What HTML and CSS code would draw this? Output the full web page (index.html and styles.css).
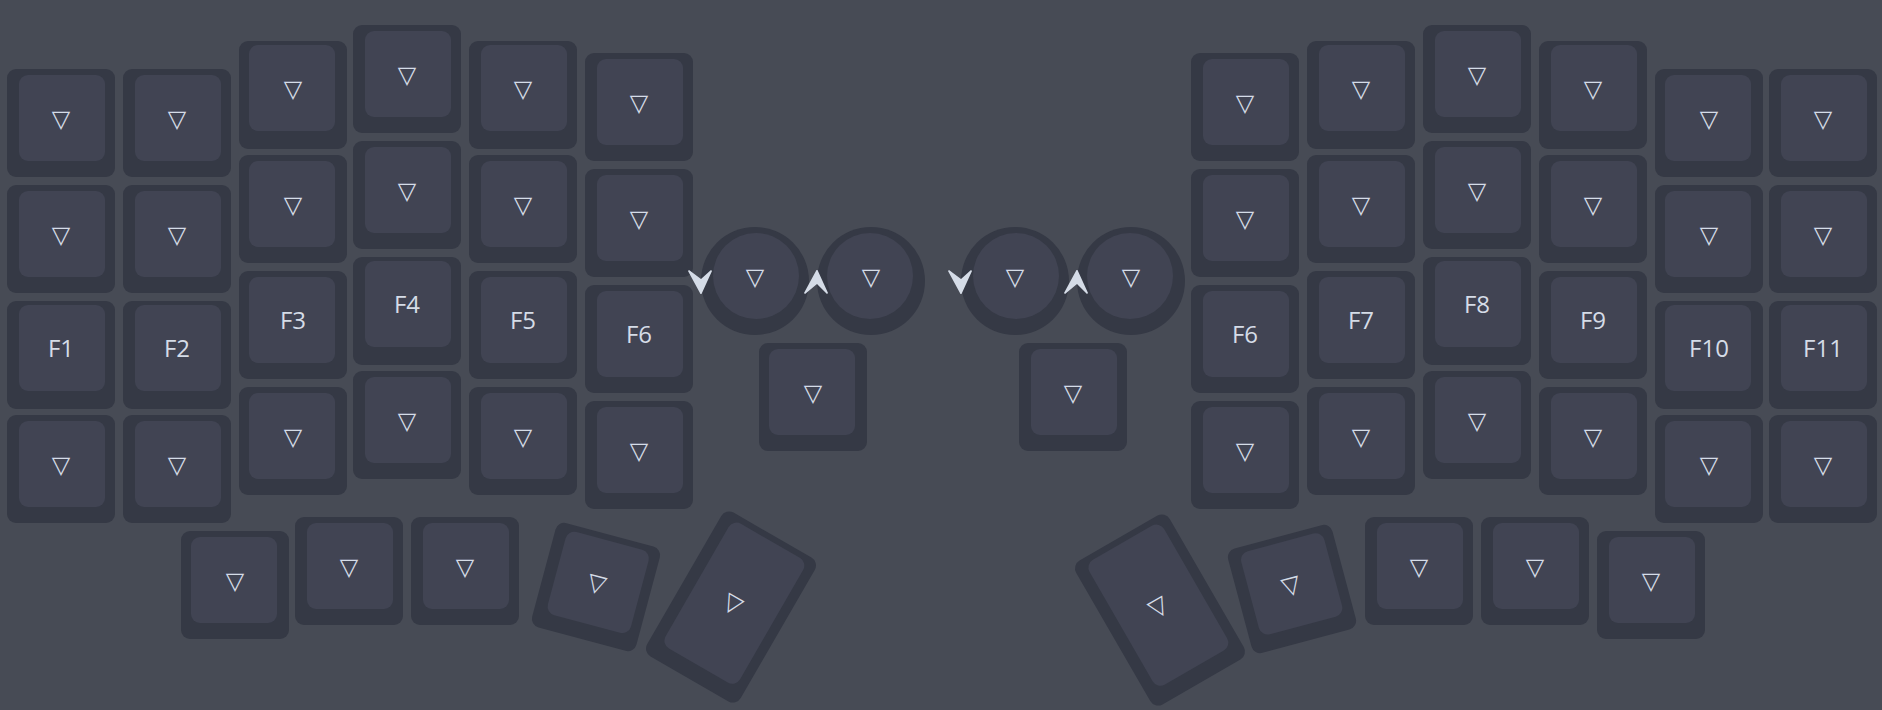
FILE: index.html
```html
<!DOCTYPE html>
<html lang="en">
<head>
<meta charset="utf-8">
<title>Keymap</title>
<meta name="viewport" content="width=device-width, initial-scale=1">
<link rel="stylesheet" href="styles.css">
</head>
<body>
<main class="keyboard">
  <div class="matrix">
    <section class="half half-left" aria-label="Left half">
      <div class="column column-outer">
        <button class="key"><span>▽</span></button>
        <button class="key"><span>▽</span></button>
        <button class="key"><span>F1</span></button>
        <button class="key"><span>▽</span></button>
      </div>
      <div class="column column-outer">
        <button class="key"><span>▽</span></button>
        <button class="key"><span>▽</span></button>
        <button class="key"><span>F2</span></button>
        <button class="key"><span>▽</span></button>
      </div>
      <div class="column column-ring column-near">
        <button class="key"><span>▽</span></button>
        <button class="key"><span>▽</span></button>
        <button class="key"><span>F3</span></button>
        <button class="key"><span>▽</span></button>
      </div>
      <div class="column column-middle">
        <button class="key"><span>▽</span></button>
        <button class="key"><span>▽</span></button>
        <button class="key"><span>F4</span></button>
        <button class="key"><span>▽</span></button>
      </div>
      <div class="column column-ring">
        <button class="key"><span>▽</span></button>
        <button class="key"><span>▽</span></button>
        <button class="key"><span>F5</span></button>
        <button class="key"><span>▽</span></button>
      </div>
      <div class="column column-inner">
        <button class="key"><span>▽</span></button>
        <button class="key"><span>▽</span></button>
        <button class="key"><span>F6</span></button>
        <button class="key"><span>▽</span></button>
      </div>
      <div class="cluster">
        <div class="encoders">
          <button class="key encoder"><span>▽</span>
            <svg class="arrow" viewBox="0 0 24 24" aria-hidden="true"><path d="M0 1 1 0l12 9L23 0l1 1-10.500 23h-1z"/></svg>
          </button>
          <button class="key encoder near"><span>▽</span>
            <svg class="arrow" viewBox="0 0 24 24" aria-hidden="true"><path d="M0 23l1 1 12-10 10 10 1-1L13.500 0h-1z"/></svg>
          </button>
        </div>
        <button class="key near"><span>▽</span></button>
      </div>
    </section>
    <section class="half half-right" aria-label="Right half">
      <div class="cluster">
        <div class="encoders">
          <button class="key encoder"><span>▽</span>
            <svg class="arrow" viewBox="0 0 24 24" aria-hidden="true"><path d="M0 1 1 0l12 9L23 0l1 1-10.500 23h-1z"/></svg>
          </button>
          <button class="key encoder near"><span>▽</span>
            <svg class="arrow" viewBox="0 0 24 24" aria-hidden="true"><path d="M0 23l1 1 12-10 10 10 1-1L13.500 0h-1z"/></svg>
          </button>
        </div>
        <button class="key"><span>▽</span></button>
      </div>
      <div class="column column-inner">
        <button class="key"><span>▽</span></button>
        <button class="key"><span>▽</span></button>
        <button class="key"><span>F6</span></button>
        <button class="key"><span>▽</span></button>
      </div>
      <div class="column column-ring">
        <button class="key"><span>▽</span></button>
        <button class="key"><span>▽</span></button>
        <button class="key"><span>F7</span></button>
        <button class="key"><span>▽</span></button>
      </div>
      <div class="column column-middle">
        <button class="key"><span>▽</span></button>
        <button class="key"><span>▽</span></button>
        <button class="key"><span>F8</span></button>
        <button class="key"><span>▽</span></button>
      </div>
      <div class="column column-ring">
        <button class="key"><span>▽</span></button>
        <button class="key"><span>▽</span></button>
        <button class="key"><span>F9</span></button>
        <button class="key"><span>▽</span></button>
      </div>
      <div class="column column-outer column-near">
        <button class="key"><span>▽</span></button>
        <button class="key"><span>▽</span></button>
        <button class="key"><span>F10</span></button>
        <button class="key"><span>▽</span></button>
      </div>
      <div class="column column-outer">
        <button class="key"><span>▽</span></button>
        <button class="key"><span>▽</span></button>
        <button class="key"><span>F11</span></button>
        <button class="key"><span>▽</span></button>
      </div>
    </section>
  </div>
  <div class="thumbs">
    <section class="thumb-row thumb-left" aria-label="Left thumb keys">
      <button class="key near low"><span>▽</span></button>
      <button class="key"><span>▽</span></button>
      <button class="key"><span>▽</span></button>
      <button class="key tilted"><span>▽</span></button>
      <button class="key tall"><span>▽</span></button>
    </section>
    <section class="thumb-row thumb-right" aria-label="Right thumb keys">
      <button class="key tall"><span>▽</span></button>
      <button class="key tilted"><span>▽</span></button>
      <button class="key"><span>▽</span></button>
      <button class="key"><span>▽</span></button>
      <button class="key low"><span>▽</span></button>
    </section>
  </div>
</main>
</body>
</html>
```
FILE: styles.css
```css
:root {
  --board: #474b55;
  --key: #353945;
  --cap: #414453;
  --text: #d5dce7;
}

* {
  box-sizing: border-box;
}

body {
  margin: 0;
  min-height: 100vh;
  background: var(--board);
  color: var(--text);
  font-family: "Open Sans", "Noto Sans", "DejaVu Sans", sans-serif;
}

.keyboard {
  padding: 25px 5px 0 7px;
}

.matrix,
.thumbs {
  display: flex;
  justify-content: space-between;
}

.half {
  display: grid;
  align-items: start;
}

.half-left {
  grid-template-columns: 116px 116px 114px 116px 116px 116px 224px;
}

.half-right {
  grid-template-columns: 230px 116px 116px 116px 116px 114px 108px;
}

/* Columns: each finger has its own stagger */
.column {
  display: grid;
  grid-template-rows: 116px 116px 116px 108px;
  align-items: start;
}

.column-outer {
  padding-top: 44px;
  grid-template-rows: 116px 116px 114px 108px;
}

.column-ring {
  padding-top: 16px;
  grid-template-rows: 114px 116px 116px 108px;
}

.column-middle {
  grid-template-rows: 116px 116px 114px 108px;
}

.column-inner {
  padding-top: 28px;
}

/* Keys */
.key {
  display: grid;
  width: 108px;
  height: 108px;
  padding: 6px 0 16px;
  border: 0;
  border-radius: 9px;
  background: var(--key);
  color: inherit;
  font: inherit;
  font-size: 24px;
  line-height: 32px;
}

.key::before {
  content: "";
  grid-area: 1 / 1;
  align-self: stretch;
  margin: 0 10px 0 12px;
  border-radius: 9px;
  background: var(--cap);
}

.key span {
  grid-area: 1 / 1;
  place-self: center;
}

.near::before,
.column-near .key::before {
  margin: 0 12px 0 10px;
}

.column-outer .key:nth-child(3),
.column-middle .key:nth-child(3),
.column-ring .key:nth-child(1) {
  padding: 4px 0 18px;
}

/* Encoders */
.cluster {
  display: flex;
  flex-direction: column;
  align-items: center;
  gap: 8px;
  width: 224px;
  padding-top: 202px;
}

.encoders {
  display: flex;
  gap: 8px;
}

.encoder {
  position: relative;
}

.encoder,
.encoder::before {
  border-radius: 50%;
}

.arrow {
  position: absolute;
  top: 43px;
  left: -13px;
  width: 24px;
  height: 24px;
  fill: var(--text);
}

/* Thumb keys */
.thumbs {
  margin-top: -6px;
}

.thumb-row {
  display: flex;
  align-items: flex-start;
  gap: 8px;
}

.thumb-left {
  padding-left: 174px;
}

.thumb-right {
  padding-right: 172px;
}

.low {
  margin-top: 14px;
}

.low.near {
  margin-right: -2px;
}

.tall {
  height: 166px;
}

.thumb-left .tilted {
  margin: 16px 19px 0 15px;
  transform: rotate(15deg);
}

.thumb-left .tall {
  margin-top: 7px;
  transform: rotate(30deg);
}

.thumb-right .tall {
  margin-top: 10px;
  transform: rotate(-30deg);
}

.thumb-right .tilted {
  margin: 18px 11px 0 16px;
  transform: rotate(-15deg);
}
```
